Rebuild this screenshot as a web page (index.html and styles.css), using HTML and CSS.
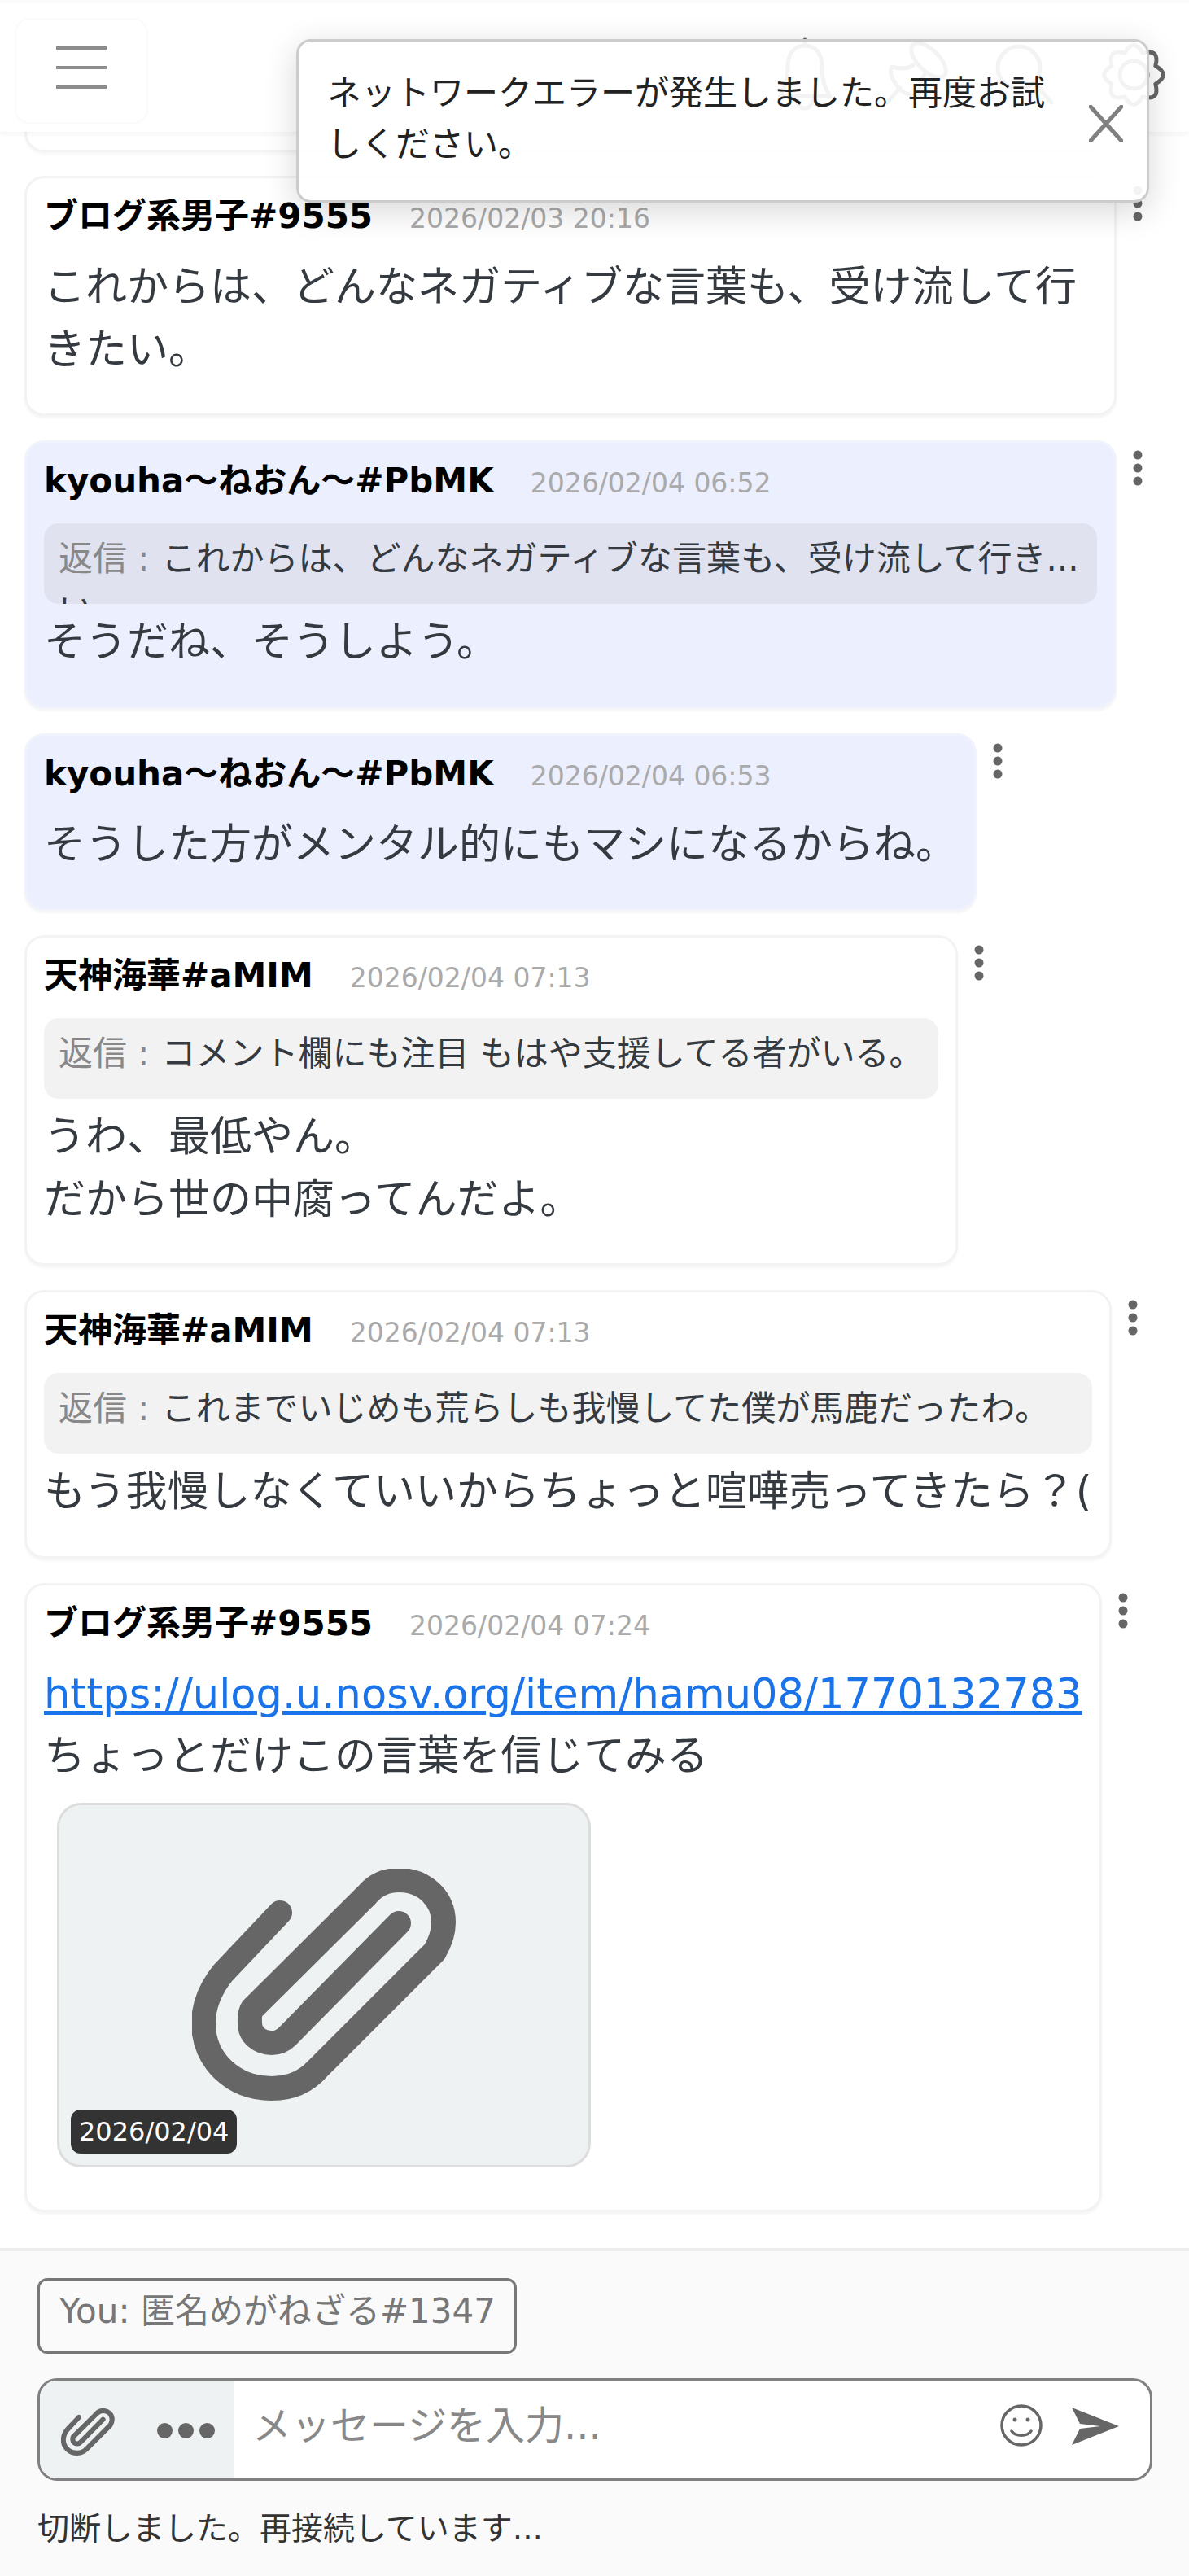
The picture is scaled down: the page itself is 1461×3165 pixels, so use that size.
FILE: index.html
```html
<!DOCTYPE html>
<html lang="ja">
<head>
    <meta charset="UTF-8">
    <meta name="viewport" content="width=device-width, initial-scale=1.0">
    <title>Chat</title>
    <link rel="stylesheet" href="styles.css">
</head>
<body>
    <svg class="sprite" aria-hidden="true">
        <symbol id="clip" viewBox="0 0 325 285">
            <path d="M108 54 L38 128 C22 148 14 168 14 190 C14 235 50 270 98 270 C120 270 140 262 155 245 L298 102 C305 90 309 78 309 66 C309 36 285 14 254 14 C238 14 225 20 215 32 L74 172 C70 178 71 185 71 190 C71 204 83 214 98 214 C105 214 112 211 117 206 L254 67" fill="none" stroke="currentColor" stroke-width="30" stroke-linecap="round"/>
        </symbol>
        <symbol id="kebab" viewBox="0 0 12 44">
            <circle cx="6" cy="6" r="5.5" fill="currentColor"/>
            <circle cx="6" cy="22" r="5.5" fill="currentColor"/>
            <circle cx="6" cy="38" r="5.5" fill="currentColor"/>
        </symbol>
    </svg>

    <div class="app">
        <header class="topbar">
            <button class="menu-btn" type="button" aria-label="menu">
                <span></span><span></span><span></span>
            </button>
            <svg class="topbar-icons" viewBox="0 0 500 90" fill="none" stroke="currentColor" stroke-width="5" stroke-linecap="round" stroke-linejoin="round">
                <path d="M45 3 V10 M45 10 C30 10 24 22 24 36 C24 55 20 62 14 72 L76 72 C70 62 66 55 66 36 C66 22 60 10 45 10Z M36 78 a9 9 0 0 0 18 0"/>
                <ellipse cx="197" cy="28" rx="27" ry="13" transform="rotate(45 197 28)"/>
                <path d="M178 34 C170 40 160 38 152 36 C146 44 158 62 168 68 C176 72 184 74 186 72 C184 62 186 52 192 46 M162 62 L146 80"/>
                <circle cx="308" cy="37" r="26"/>
                <path d="M327 56 L348 80"/>
                <g transform="translate(449 46)">
                    <path d="M26.8 -11.1 Q46 0 26.8 11.1 Q32.5 32.5 11.1 26.8 Q0 46 -11.1 26.8 Q-32.5 32.5 -26.8 11.1 Q-46 0 -26.8 -11.1 Q-32.5 -32.5 -11.1 -26.8 Q0 -46 11.1 -26.8 Q32.5 -32.5 26.8 -11.1Z"/>
                    <circle r="17"/>
                </g>
            </svg>
        </header>

        <div class="toast">
            <p class="toast-text">ネットワークエラーが発生しました。再度お試しください。</p>
            <svg class="toast-close" viewBox="0 0 42 46" fill="none" stroke="currentColor" stroke-width="5" stroke-linecap="round">
                <path d="M2 2 L40 44 M40 2 L2 44"/>
            </svg>
        </div>

        <main class="messages">
            <div class="clipped-card"></div>

            <div class="row">
                <article class="card">
                    <div class="meta"><span class="name">ブログ系男子#9555</span><span class="time">2026/02/03 20:16</span></div>
                    <p class="body">これからは、どんなネガティブな言葉も、受け流して行きたい。</p>
                </article>
                <svg class="kebab"><use href="#kebab"/></svg>
            </div>

            <div class="row">
                <article class="card card-mine card-full">
                    <div class="meta"><span class="name">kyouha～ねおん～#PbMK</span><span class="time">2026/02/04 06:52</span></div>
                    <div class="reply"><span class="reply-label">返信 :</span>これからは、どんなネガティブな言葉も、受け流して行き...<br><span class="reply-over">い</span></div>
                    <p class="body">そうだね、そうしよう。</p>
                </article>
                <svg class="kebab"><use href="#kebab"/></svg>
            </div>

            <div class="row">
                <article class="card card-mine">
                    <div class="meta"><span class="name">kyouha～ねおん～#PbMK</span><span class="time">2026/02/04 06:53</span></div>
                    <p class="body">そうした方がメンタル的にもマシになるからね。</p>
                </article>
                <svg class="kebab"><use href="#kebab"/></svg>
            </div>

            <div class="row">
                <article class="card">
                    <div class="meta"><span class="name">天神海華#aMIM</span><span class="time">2026/02/04 07:13</span></div>
                    <div class="reply"><span class="reply-label">返信 :</span>コメント欄にも注目 もはや支援してる者がいる。</div>
                    <p class="body">うわ、最低やん。<br>だから世の中腐ってんだよ。</p>
                </article>
                <svg class="kebab"><use href="#kebab"/></svg>
            </div>

            <div class="row">
                <article class="card">
                    <div class="meta"><span class="name">天神海華#aMIM</span><span class="time">2026/02/04 07:13</span></div>
                    <div class="reply"><span class="reply-label">返信 :</span>これまでいじめも荒らしも我慢してた僕が馬鹿だったわ。</div>
                    <p class="body">もう我慢しなくていいからちょっと喧嘩売ってきたら？(</p>
                </article>
                <svg class="kebab"><use href="#kebab"/></svg>
            </div>

            <div class="row">
                <article class="card">
                    <div class="meta"><span class="name">ブログ系男子#9555</span><span class="time">2026/02/04 07:24</span></div>
                    <p class="body"><a href="#">https://ulog.u.nosv.org/item/hamu08/1770132783</a><br>ちょっとだけこの言葉を信じてみる</p>
                    <div class="attachment">
                        <svg class="attachment-icon"><use href="#clip"/></svg>
                        <span class="attachment-date">2026/02/04</span>
                    </div>
                </article>
                <svg class="kebab"><use href="#kebab"/></svg>
            </div>
        </main>

        <footer class="composer">
            <div class="you-badge">You: 匿名めがねざる#1347</div>
            <div class="input-box">
                <div class="input-tools">
                    <svg class="input-clip"><use href="#clip"/></svg>
                    <span class="input-dots"><i></i><i></i><i></i></span>
                </div>
                <input class="input-text" type="text" placeholder="メッセージを入力...">
                <svg class="emoji-icon" viewBox="0 0 52 52" fill="none" stroke="currentColor" stroke-width="3.5" stroke-linecap="round">
                    <circle cx="26" cy="26" r="24"/>
                    <circle cx="18" cy="19" r="2.5" fill="currentColor" stroke="none"/>
                    <circle cx="34" cy="19" r="2.5" fill="currentColor" stroke="none"/>
                    <path d="M14 33 C19 40 33 40 38 33"/>
                </svg>
                <svg class="send-icon" viewBox="0 0 60 48">
                    <path d="M1 1 L59 24 L1 47 L11 27 L36 24 L11 21 Z" fill="currentColor"/>
                </svg>
            </div>
            <p class="status">切断しました。再接続しています...</p>
        </footer>
    </div>
</body>
</html>
```

FILE: styles.css
```css
* {
    box-sizing: border-box;
}

html, body {
    margin: 0;
    padding: 0;
}

body {
    font-family: "DejaVu Sans", "Noto Sans CJK JP", sans-serif;
    color: #343a40;
    background-color: #fff;
}

p {
    margin: 0;
}

.sprite {
    display: none;
}

.app {
    position: relative;
    display: flex;
    flex-direction: column;
    height: 3165px;
    overflow: hidden;
}

/* header */
.topbar {
    position: relative;
    z-index: 2;
    display: flex;
    justify-content: space-between;
    flex: 0 0 auto;
    height: 162px;
    padding: 18px 17px 0 18px;
    background-color: #fff;
    border-top: 4px solid #fafafa;
    box-shadow: 0 3px 6px rgba(0, 0, 0, 0.05);
}

.menu-btn {
    display: flex;
    flex-direction: column;
    align-items: center;
    gap: 20px;
    width: 164px;
    height: 130px;
    padding: 33px 0 0;
    background: #fff;
    border: 2px solid #fafafa;
    border-radius: 18px;
}

.menu-btn span {
    display: block;
    width: 62px;
    height: 4px;
    background-color: #8c8c8c;
}

.topbar-icons {
    width: 500px;
    height: 90px;
    margin-top: 24px;
    color: #666;
}

/* toast */
.toast {
    position: absolute;
    top: 48px;
    left: 364px;
    z-index: 5;
    display: flex;
    align-items: center;
    width: 1048px;
    height: 201px;
    padding: 0 29px 6px 35px;
    background-color: rgba(255, 255, 255, 0.92);
    border: 3px solid #ccc;
    border-radius: 18px;
    box-shadow: 0 10px 40px rgba(0, 0, 0, 0.16);
}

.toast-text {
    width: 900px;
    font-size: 42px;
    line-height: 63px;
    color: #222;
}

.toast-close {
    flex: 0 0 auto;
    width: 42px;
    height: 46px;
    margin: 12px 0 0 auto;
    color: #808080;
}

/* message list */
.messages {
    display: flex;
    flex-direction: column;
    flex: 1 1 auto;
    gap: 30px;
    min-height: 0;
    padding-left: 30px;
    overflow: hidden;
}

.clipped-card {
    flex: 0 0 auto;
    width: 1340px;
    height: 25px;
    margin-bottom: -1px;
    border: 3px solid #f3f3f3;
    border-top: none;
    border-radius: 0 0 24px 24px;
    box-shadow: 0 3px 3px rgba(0, 0, 0, 0.03);
}

.row {
    display: flex;
    align-items: flex-start;
    flex: 0 0 auto;
}

.card {
    width: fit-content;
    max-width: 1342px;
    padding: 17px 21px 40px;
    background-color: #fff;
    border: 3px solid #f3f3f3;
    border-radius: 24px;
    box-shadow: 0 3px 3px rgba(0, 0, 0, 0.04);
}

.card-mine {
    background-color: #eceffd;
    border-color: #f0f2fc;
}

.card-full {
    width: 1342px;
}

.kebab {
    flex: 0 0 auto;
    width: 12px;
    height: 44px;
    margin: 12px 0 0 20px;
    color: #666;
}

.meta {
    display: flex;
    align-items: baseline;
    gap: 45px;
    height: 60px;
    line-height: 60px;
    margin-bottom: 19px;
    white-space: nowrap;
}

.name {
    font-size: 42px;
    font-weight: 700;
    color: #000;
}

.time {
    font-size: 33px;
    color: #aaa;
}

.reply {
    height: 99px;
    margin: 22px 0 9px;
    padding: 12px 18px;
    overflow: hidden;
    font-size: 42px;
    line-height: 63px;
    background-color: rgba(0, 0, 0, 0.05);
    border-radius: 18px;
}

.reply-label {
    margin-right: 15px;
    color: #888;
}

.body {
    font-size: 51px;
    line-height: 76.5px;
}

.body a {
    color: #1a73e8;
}

/* attachment */
.attachment {
    position: relative;
    display: flex;
    align-items: center;
    justify-content: center;
    width: 656px;
    height: 448px;
    margin: 18px 0 12px 16px;
    background-color: #eef2f3;
    border: 3px solid #ddd;
    border-radius: 30px;
}

.attachment-icon {
    width: 325px;
    height: 285px;
    color: #666;
}

.attachment-date {
    position: absolute;
    left: 14px;
    bottom: 14px;
    padding: 0 10px;
    font-size: 32px;
    line-height: 54px;
    color: #fff;
    background-color: #333;
    border-radius: 12px;
}

/* composer */
.composer {
    flex: 0 0 403px;
    padding: 33px 46px 0;
    background-color: #fafafa;
    border-top: 4px solid #eee;
}

.you-badge {
    width: 589px;
    height: 93px;
    padding: 6px 0 0 24px;
    font-size: 42px;
    line-height: 64px;
    white-space: nowrap;
    color: #777;
    border: 3px solid #777;
    border-radius: 12px;
}

.input-box {
    display: flex;
    align-items: center;
    width: 1370px;
    height: 126px;
    margin-top: 30px;
    overflow: hidden;
    background-color: #fff;
    border: 3px solid #808080;
    border-radius: 24px;
}

.input-tools {
    display: flex;
    align-items: center;
    flex: 0 0 auto;
    width: 239px;
    height: 100%;
    padding: 0 0 0 26px;
    background-color: #eef2f3;
}

.input-clip {
    width: 66px;
    height: 58px;
    margin-top: 6px;
    color: #666;
}

.input-dots {
    display: flex;
    gap: 7px;
    margin: 3px 0 0 52px;
}

.input-dots i {
    display: block;
    width: 19px;
    height: 19px;
    background-color: #666;
    border-radius: 50%;
}

.input-text {
    flex: 1 1 auto;
    min-width: 0;
    height: 100%;
    padding: 0 0 10px 22px;
    font-family: inherit;
    font-size: 48px;
    background: transparent;
    border: none;
    outline: none;
}

.input-text::placeholder {
    color: #888;
    opacity: 1;
}

.emoji-icon {
    flex: 0 0 auto;
    width: 52px;
    height: 52px;
    margin: 0 0 10px 0;
    color: #666;
}

.send-icon {
    flex: 0 0 auto;
    width: 60px;
    height: 48px;
    margin: 0 37px 8px 35px;
    color: #666;
}

.status {
    margin-top: 30px;
    font-size: 39px;
    line-height: 58px;
    color: #333;
}
```
